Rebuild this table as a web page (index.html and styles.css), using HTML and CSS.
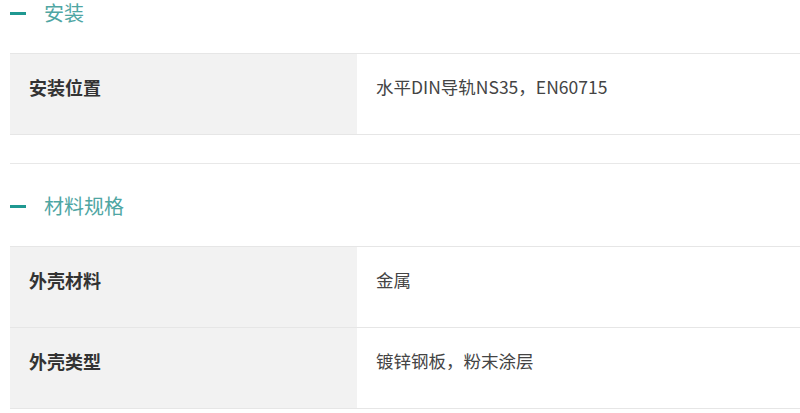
FILE: index.html
```html
<!DOCTYPE html>
<html lang="zh-CN">
<head>
<meta charset="utf-8">
<title>规格</title>
<link rel="stylesheet" href="styles.css">
</head>
<body>
<div class="page">
  <section class="section">
    <h2 class="section-title"><span class="dash"></span><span class="title-text">安装</span></h2>
    <div class="spec-table">
      <div class="spec-row">
        <div class="spec-label">安装位置</div>
        <div class="spec-value">水平DIN导轨NS35，EN60715</div>
      </div>
    </div>
  </section>
  <section class="section section-next">
    <h2 class="section-title"><span class="dash"></span><span class="title-text">材料规格</span></h2>
    <div class="spec-table">
      <div class="spec-row">
        <div class="spec-label">外壳材料</div>
        <div class="spec-value">金属</div>
      </div>
      <div class="spec-row">
        <div class="spec-label">外壳类型</div>
        <div class="spec-value">镀锌钢板，粉末涂层</div>
      </div>
    </div>
  </section>
</div>
</body>
</html>
```

FILE: styles.css
```css
html, body {
  margin: 0;
  padding: 0;
  background: #ffffff;
}
body {
  font-family: "Noto Sans CJK SC", "Noto Sans", sans-serif;
  color: #333333;
}
.page {
  padding-left: 10px;
}
.section {
  padding-bottom: 28px;
}
.section:last-child {
  padding-bottom: 4px;
}
.section-next {
  border-top: 1px solid #e8e8e8;
  padding-top: 29px;
}
.section-title {
  margin: 0 0 27px 0;
  height: 26px;
  display: flex;
  align-items: center;
  font-weight: normal;
  font-size: 20px;
  line-height: 26px;
}
.dash {
  width: 16px;
  height: 3px;
  background: #1f9891;
  margin-right: 18px;
}
.title-text {
  color: #4fa6a3;
}
.spec-table {
  border-top: 1px solid #e6e6e6;
}
.spec-row {
  display: grid;
  grid-template-columns: 347px 1fr;
  border-bottom: 1px solid #e6e6e6;
}
.spec-label {
  background: #f2f2f2;
  padding: 20px 19px 34px 19px;
  font-size: 18px;
  line-height: 26px;
  font-weight: bold;
  color: #333333;
}
.spec-value {
  padding: 20px 19px 34px 19px;
  font-size: 17.5px;
  line-height: 26px;
  color: #444444;
}
```
